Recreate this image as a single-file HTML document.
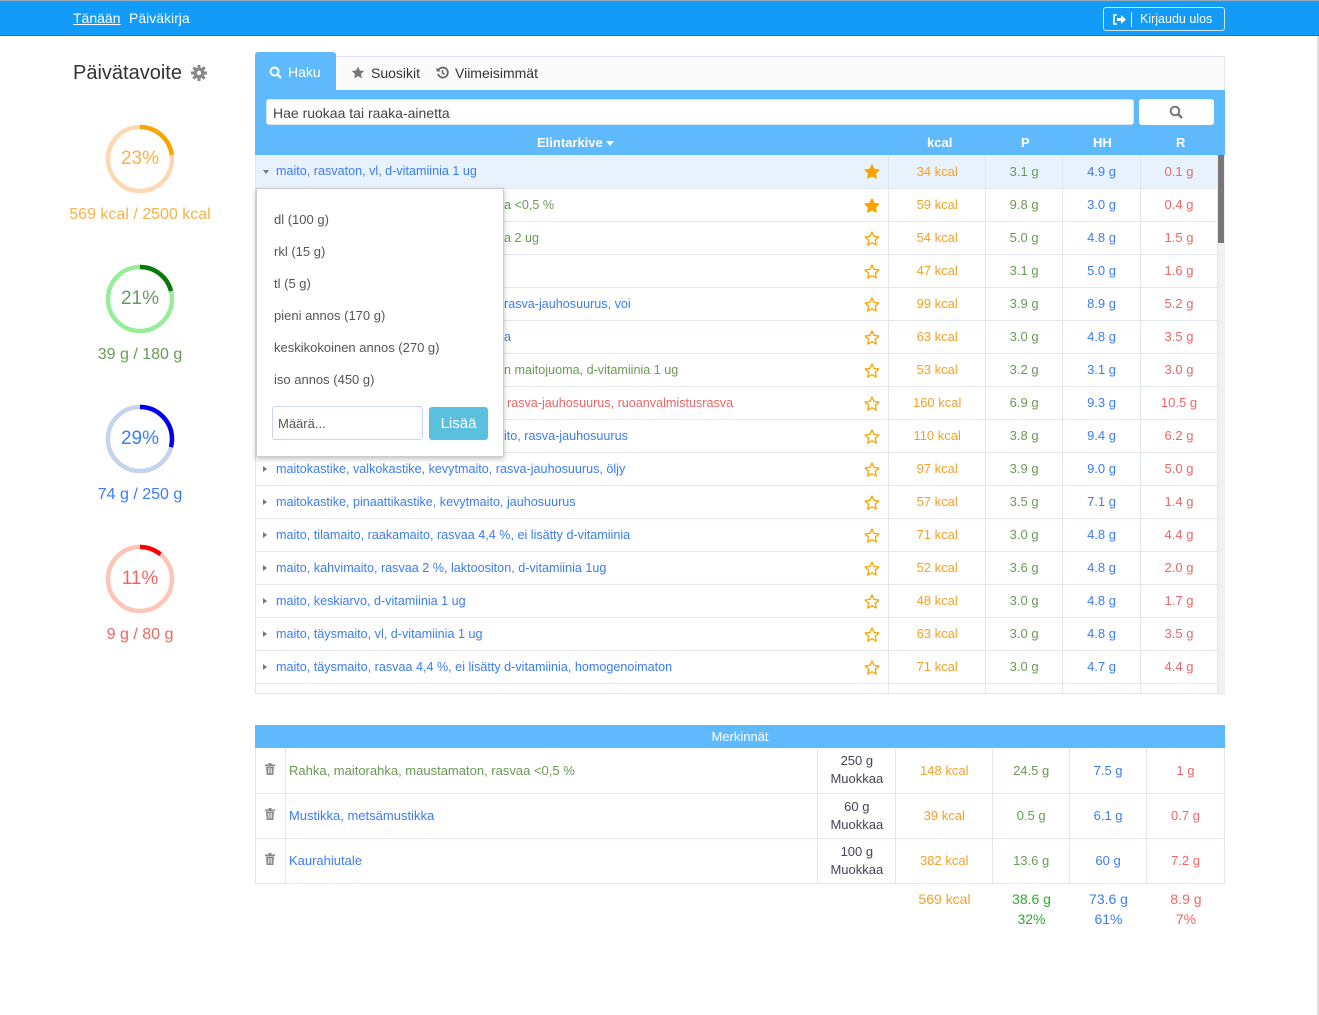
<!DOCTYPE html>
<html><head><meta charset="utf-8"><style>
*{box-sizing:border-box;margin:0;padding:0}
body{width:1319px;height:1015px;background:#fff;font-family:"Liberation Sans",sans-serif;font-size:13px;position:relative;overflow:hidden;color:#333}
.nav{position:absolute;left:0;top:0;width:1319px;height:36px;background:#129bf7;border-top:1px solid #9ab;border-bottom:1px solid #0d7fd0}
.nav a{position:absolute;top:9px;color:#fff;font-size:14px}
.logout{position:absolute;left:1103px;top:6px;width:122px;height:24px;border:1px solid #cfe6fb;border-radius:3px;color:#fff;font-size:12.5px}
.a{position:absolute}
.ring{position:absolute;left:105px;width:70px;height:70px}
.lbl{position:absolute;left:40px;width:200px;text-align:center;font-size:16px}
.pct{position:absolute;left:105px;width:70px;text-align:center;font-size:19px}
table{border-collapse:collapse}
.res td{height:33px;border-bottom:1px solid #e2e6ee;border-right:1px solid #e2e6ee;text-align:center;font-size:13px}
.res td.n{text-align:left;color:#3b7cf5;padding-left:20px;position:relative;border-right:none;font-size:12.6px}
.n .tri{position:absolute;left:7px;top:13px;width:0;height:0;border-top:3px solid transparent;border-bottom:3px solid transparent;border-left:4px solid #777}
.k{color:#f5a02a}.p{color:#6a9a55}.h{color:#3b7cf5}.r{color:#f06565}
.st{width:33px;border-right:1px solid #e2e6ee}
.mk td{border-bottom:1px solid #e2e6ee;border-right:1px solid #e2e6ee;text-align:center;height:45px}
</style></head><body>
<div class="nav"><a style="left:73px;text-decoration:underline">Tänään</a><a style="left:129px">Päiväkirja</a>
<div class="logout"><svg class="a" style="left:8px;top:6px" width="14" height="11" viewBox="0 0 14 11"><path d="M5 1H2v9h3" stroke="#fff" stroke-width="1.6" fill="none"/><path d="M5 4h4V1l5 4.5L9 10V7H5z" fill="#fff"/></svg><span class="a" style="left:27px;top:4px;width:1px;height:15px;background:#fff"></span><span class="a" style="left:36px;top:4px">Kirjaudu ulos</span></div></div>

<div class="a" style="left:73px;top:62px;font-size:20px;color:#333">Päivätavoite</div>
<svg class="a" style="left:191px;top:65px" width="16" height="16" viewBox="0 0 16 16"><circle cx="8" cy="8" r="5.5" fill="#888"/><g stroke="#888" stroke-width="3"><path d="M8 0v16M0 8h16M2.3 2.3l11.4 11.4M13.7 2.3L2.3 13.7"/></g><circle cx="8" cy="8" r="2.2" fill="#fff"/></svg>

<svg class="ring" style="top:124px" viewBox="0 0 70 70"><circle cx="35" cy="35" r="32" fill="none" stroke="#fcd9b3" stroke-width="4.5"/><circle cx="35" cy="35" r="32" fill="none" stroke="#f9a500" stroke-width="4.5" stroke-dasharray="46.2 200" transform="rotate(-90 35 35)"/></svg>
<div class="pct" style="top:148px;color:#f9b24a">23%</div><div class="lbl" style="top:206px;color:#f9b24a">569 kcal / 2500 kcal</div>
<svg class="ring" style="top:264px" viewBox="0 0 70 70"><circle cx="35" cy="35" r="32" fill="none" stroke="#98ee98" stroke-width="4.5"/><circle cx="35" cy="35" r="32" fill="none" stroke="#0a7a0a" stroke-width="4.5" stroke-dasharray="42.2 200" transform="rotate(-90 35 35)"/></svg>
<div class="pct" style="top:288px;color:#6a9a6a">21%</div><div class="lbl" style="top:346px;color:#6a9a55">39 g / 180 g</div>
<svg class="ring" style="top:404px" viewBox="0 0 70 70"><circle cx="35" cy="35" r="32" fill="none" stroke="#c4d4ee" stroke-width="4.5"/><circle cx="35" cy="35" r="32" fill="none" stroke="#0000ee" stroke-width="4.5" stroke-dasharray="58.3 200" transform="rotate(-90 35 35)"/></svg>
<div class="pct" style="top:428px;color:#3b7cf5">29%</div><div class="lbl" style="top:486px;color:#3b7cf5">74 g / 250 g</div>
<svg class="ring" style="top:544px" viewBox="0 0 70 70"><circle cx="35" cy="35" r="32" fill="none" stroke="#fcc5b5" stroke-width="4.5"/><circle cx="35" cy="35" r="32" fill="none" stroke="#f00" stroke-width="4.5" stroke-dasharray="22.1 200" transform="rotate(-90 35 35)"/></svg>
<div class="pct" style="top:568px;color:#f06565">11%</div><div class="lbl" style="top:626px;color:#f06565">9 g / 80 g</div>

<!-- main panel -->
<div class="a" style="left:255px;top:56px;width:970px;height:638px;border:1px solid #e2e6ee;background:#fff"></div>
<div class="a" style="left:255px;top:56px;width:970px;height:34px;background:#fafafa;border:1px solid #e2e6ee;border-bottom:none"></div>
<div class="a" style="left:255px;top:52px;width:81px;height:38px;background:#5eb9fd;border-radius:3px 3px 0 0;color:#fff;font-size:14px"><svg class="a" style="left:14px;top:14px" width="13" height="13" viewBox="0 0 13 13"><circle cx="5.5" cy="5.5" r="4" stroke="#fff" stroke-width="2" fill="none"/><path d="M8.5 8.5l3.5 3.5" stroke="#fff" stroke-width="2.2"/></svg><span class="a" style="left:33px;top:12px">Haku</span></div>
<svg class="a" style="left:351px;top:66px" width="14" height="13" viewBox="0 0 24 23"><path d="M12 1l3.3 7 7.7.9-5.7 5.3 1.5 7.6L12 18l-6.8 3.8 1.5-7.6L1 8.9l7.7-.9z" fill="#777"/></svg>
<div class="a" style="left:371px;top:65px;font-size:14px;color:#333">Suosikit</div>
<svg class="a" style="left:436px;top:66px" width="13" height="13" viewBox="0 0 13 13"><path d="M2.5 4A5 5 0 1 1 2 8" stroke="#666" stroke-width="1.8" fill="none"/><path d="M0.5 1.5v4h4z" fill="#666"/><path d="M6.5 4v3l2 1.5" stroke="#666" stroke-width="1.5" fill="none"/></svg>
<div class="a" style="left:455px;top:65px;font-size:14px;color:#333">Viimeisimmät</div>
<div class="a" style="left:255px;top:90px;width:970px;height:65px;background:#5eb9fd"></div>
<div class="a" style="left:266px;top:99px;width:868px;height:26px;background:#fff;border:1px solid #d8e4f0;border-radius:3px;padding:5px 6px;font-size:14px;color:#444">Hae ruokaa tai raaka-ainetta</div>
<div class="a" style="left:1139px;top:99px;width:75px;height:26px;background:#fff;border-radius:3px"><svg class="a" style="left:30px;top:6px" width="14" height="14" viewBox="0 0 14 14"><circle cx="6" cy="6" r="4.3" stroke="#777" stroke-width="2" fill="none"/><path d="M9 9l4 4" stroke="#777" stroke-width="2.4"/></svg></div>
<div class="a" style="left:537px;top:135px;color:#fff;font-weight:bold;font-size:13px">Elintarkive <span style="display:inline-block;border-left:4px solid transparent;border-right:4px solid transparent;border-top:5px solid #fff;vertical-align:middle"></span></div>
<div class="a" style="left:927px;top:135px;color:#fff;font-weight:bold">kcal</div>
<div class="a" style="left:1021px;top:135px;color:#fff;font-weight:bold">P</div>
<div class="a" style="left:1093px;top:135px;color:#fff;font-weight:bold">HH</div>
<div class="a" style="left:1176px;top:135px;color:#fff;font-weight:bold">R</div>

<div class="a" style="left:256px;top:155px;width:962px;height:538px;overflow:hidden">
<table class="res" style="width:962px">
<colgroup><col style="width:600px"><col style="width:33px"><col style="width:97px"><col style="width:77px"><col style="width:78px"><col style="width:77px"></colgroup>
<tr style="background:#e8f2fd"><td class="n"><span class="tri" style="border-left:3px solid transparent;border-right:3px solid transparent;border-top:4px solid #777;border-bottom:none;top:15px"></span>maito, rasvaton, vl, d-vitamiinia 1 ug</td><td class="st">★F</td><td class="k">34 kcal</td><td class="p">3.1 g</td><td class="h">4.9 g</td><td class="r">0.1 g</td></tr>
<tr><td class="n p" style="padding-left:248px;color:#6a9a55">a &lt;0,5 %</td><td class="st">F</td><td class="k">59 kcal</td><td class="p">9.8 g</td><td class="h">3.0 g</td><td class="r">0.4 g</td></tr>
<tr><td class="n" style="padding-left:248px;color:#6a9a55">a 2 ug</td><td class="st">E</td><td class="k">54 kcal</td><td class="p">5.0 g</td><td class="h">4.8 g</td><td class="r">1.5 g</td></tr>
<tr><td class="n"></td><td class="st">E</td><td class="k">47 kcal</td><td class="p">3.1 g</td><td class="h">5.0 g</td><td class="r">1.6 g</td></tr>
<tr><td class="n" style="padding-left:248px">rasva-jauhosuurus, voi</td><td class="st">E</td><td class="k">99 kcal</td><td class="p">3.9 g</td><td class="h">8.9 g</td><td class="r">5.2 g</td></tr>
<tr><td class="n" style="padding-left:248px">a</td><td class="st">E</td><td class="k">63 kcal</td><td class="p">3.0 g</td><td class="h">4.8 g</td><td class="r">3.5 g</td></tr>
<tr><td class="n" style="padding-left:248px;color:#6a9a55">n maitojuoma, d-vitamiinia 1 ug</td><td class="st">E</td><td class="k">53 kcal</td><td class="p">3.2 g</td><td class="h">3.1 g</td><td class="r">3.0 g</td></tr>
<tr><td class="n" style="padding-left:251px;color:#f06565">rasva-jauhosuurus, ruoanvalmistusrasva</td><td class="st">E</td><td class="k">160 kcal</td><td class="p">6.9 g</td><td class="h">9.3 g</td><td class="r">10.5 g</td></tr>
<tr><td class="n" style="padding-left:248px">ito, rasva-jauhosuurus</td><td class="st">E</td><td class="k">110 kcal</td><td class="p">3.8 g</td><td class="h">9.4 g</td><td class="r">6.2 g</td></tr>
<tr><td class="n"><span class="tri"></span>maitokastike, valkokastike, kevytmaito, rasva-jauhosuurus, öljy</td><td class="st">E</td><td class="k">97 kcal</td><td class="p">3.9 g</td><td class="h">9.0 g</td><td class="r">5.0 g</td></tr>
<tr><td class="n"><span class="tri"></span>maitokastike, pinaattikastike, kevytmaito, jauhosuurus</td><td class="st">E</td><td class="k">57 kcal</td><td class="p">3.5 g</td><td class="h">7.1 g</td><td class="r">1.4 g</td></tr>
<tr><td class="n"><span class="tri"></span>maito, tilamaito, raakamaito, rasvaa 4,4 %, ei lisätty d-vitamiinia</td><td class="st">E</td><td class="k">71 kcal</td><td class="p">3.0 g</td><td class="h">4.8 g</td><td class="r">4.4 g</td></tr>
<tr><td class="n"><span class="tri"></span>maito, kahvimaito, rasvaa 2 %, laktoositon, d-vitamiinia 1ug</td><td class="st">E</td><td class="k">52 kcal</td><td class="p">3.6 g</td><td class="h">4.8 g</td><td class="r">2.0 g</td></tr>
<tr><td class="n"><span class="tri"></span>maito, keskiarvo, d-vitamiinia 1 ug</td><td class="st">E</td><td class="k">48 kcal</td><td class="p">3.0 g</td><td class="h">4.8 g</td><td class="r">1.7 g</td></tr>
<tr><td class="n"><span class="tri"></span>maito, täysmaito, vl, d-vitamiinia 1 ug</td><td class="st">E</td><td class="k">63 kcal</td><td class="p">3.0 g</td><td class="h">4.8 g</td><td class="r">3.5 g</td></tr>
<tr><td class="n"><span class="tri"></span>maito, täysmaito, rasvaa 4,4 %, ei lisätty d-vitamiinia, homogenoimaton</td><td class="st">E</td><td class="k">71 kcal</td><td class="p">3.0 g</td><td class="h">4.7 g</td><td class="r">4.4 g</td></tr>
<tr><td class="n"></td><td class="st"></td><td></td><td></td><td></td><td></td></tr>
</table></div>
<div class="a" style="left:1218px;top:155px;width:7px;height:538px;background:#f1f1f1"></div>
<div class="a" style="left:1218px;top:155px;width:6px;height:88px;background:#777"></div>

<!-- popup -->
<div class="a" style="left:256px;top:188px;width:248px;height:269px;background:#fff;border:1px solid #ccc;box-shadow:0 2px 5px rgba(0,0,0,.25);font-size:13px;color:#555">
<div class="a" style="left:17px;top:23px">dl (100 g)</div>
<div class="a" style="left:17px;top:55px">rkl (15 g)</div>
<div class="a" style="left:17px;top:87px">tl (5 g)</div>
<div class="a" style="left:17px;top:119px">pieni annos (170 g)</div>
<div class="a" style="left:17px;top:151px">keskikokoinen annos (270 g)</div>
<div class="a" style="left:17px;top:183px">iso annos (450 g)</div>
<div class="a" style="left:15px;top:217px;width:151px;height:34px;border:1px solid #c8d4f0;border-radius:3px;padding:9px 5px;color:#555">Määrä...</div>
<div class="a" style="left:172px;top:218px;width:59px;height:33px;background:#5bc0de;border-radius:3px;color:#fff;font-size:15px;text-align:center;padding-top:8px">Lisää</div>
</div>

<!-- merkinnät -->
<div class="a" style="left:255px;top:725px;width:970px;height:23px;background:#5eb9fd;color:#fff;text-align:center;padding-top:4px;font-size:13px">Merkinnät</div>
<table class="mk a" style="left:255px;top:748px;width:970px;border-left:1px solid #e2e6ee">
<colgroup><col style="width:30px"><col style="width:533px"><col style="width:78px"><col style="width:97px"><col style="width:77px"><col style="width:77px"><col style="width:78px"></colgroup>
<tr><td>T</td><td style="text-align:left;padding-left:3px;color:#6a9a55">Rahka, maitorahka, maustamaton, rasvaa &lt;0,5 %</td><td style="color:#445;line-height:18px">250 g<br>Muokkaa</td><td class="k">148 kcal</td><td class="p">24.5 g</td><td class="h">7.5 g</td><td class="r">1 g</td></tr>
<tr><td>T</td><td style="text-align:left;padding-left:3px;color:#3b7cf5">Mustikka, metsämustikka</td><td style="color:#445;line-height:18px">60 g<br>Muokkaa</td><td class="k">39 kcal</td><td class="p">0.5 g</td><td class="h">6.1 g</td><td class="r">0.7 g</td></tr>
<tr><td>T</td><td style="text-align:left;padding-left:3px;color:#3b7cf5">Kaurahiutale</td><td style="color:#445;line-height:18px">100 g<br>Muokkaa</td><td class="k">382 kcal</td><td class="p">13.6 g</td><td class="h">60 g</td><td class="r">7.2 g</td></tr>
</table>
<div class="a k" style="left:896px;top:891px;width:97px;text-align:center;font-size:14px">569 kcal</div>
<div class="a" style="left:993px;top:889px;width:77px;text-align:center;font-size:14px;color:#2eaa2e;line-height:20px">38.6 g<br>32%</div>
<div class="a h" style="left:1070px;top:889px;width:77px;text-align:center;font-size:14px;line-height:20px">73.6 g<br>61%</div>
<div class="a r" style="left:1147px;top:889px;width:78px;text-align:center;font-size:14px;line-height:20px">8.9 g<br>7%</div>
<div class="a" style="left:1317px;top:36px;width:2px;height:979px;background:#ddd"></div>

<script>
document.querySelectorAll('td.st').forEach(function(td){var t=td.textContent;var f=t.indexOf('F')>=0;if(t.indexOf('F')<0&&t.indexOf('E')<0){return}
td.innerHTML='<svg width="16" height="15" viewBox="0 0 24 23" style="vertical-align:middle"><path d="M12 1.5l3.2 6.8 7.3.9-5.4 5 1.4 7.3L12 17.9l-6.5 3.6 1.4-7.3-5.4-5 7.3-.9z" fill="'+(f?'#f9a500':'none')+'" stroke="#f9a500" stroke-width="2" stroke-linejoin="round"/></svg>';});
document.querySelectorAll('.mk td').forEach(function(td){if(td.textContent==='T'){td.innerHTML='<svg width="10" height="12" viewBox="0 0 10 12"><rect x="0" y="1.5" width="10" height="1.5" fill="#888"/><rect x="3.5" y="0" width="3" height="1.5" fill="#888"/><path d="M1 3.5h8l-.7 8.5H1.7z" fill="#888"/><path d="M3.3 5v5.5M5 5v5.5M6.7 5v5.5" stroke="#fff" stroke-width=".7"/></svg>';td.style.verticalAlign='middle'}});
</script>
</body></html>
